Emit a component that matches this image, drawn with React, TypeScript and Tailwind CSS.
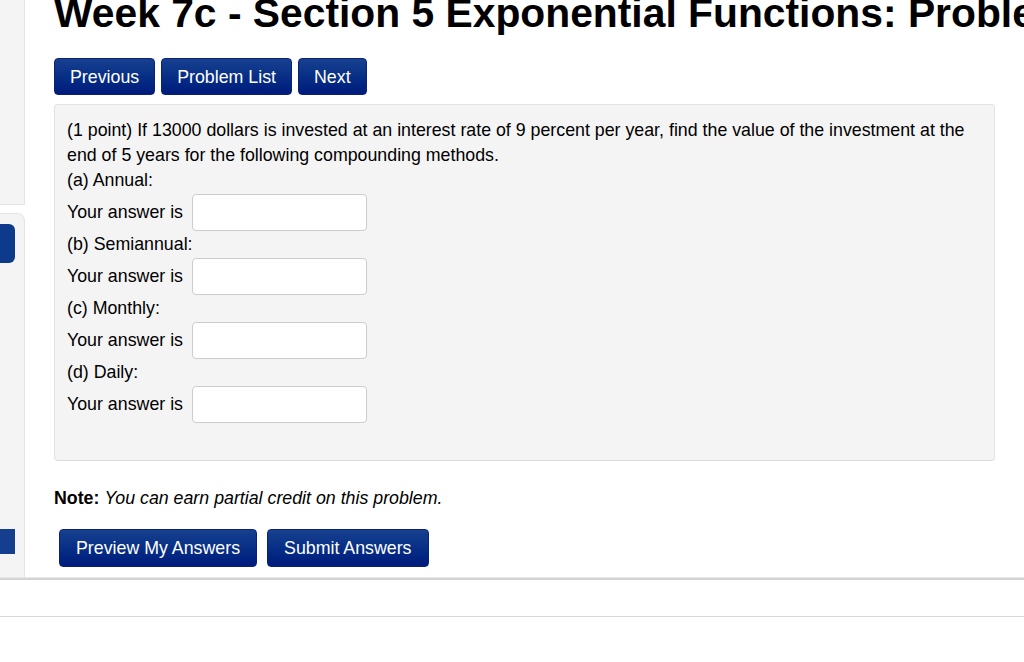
import React from "react";

function NavButton({ label }: { label: string }) {
  return (
    <button className="h-[37px] px-[15px] rounded-[4px] border border-[#0b2375] bg-gradient-to-b from-[#17408f] to-[#001a7c] text-white text-[17.8px] leading-none pt-[2px]">
      {label}
    </button>
  );
}

function AnswerRow() {
  return (
    <div className="flex items-center my-[1px] h-[37px]">
      <span className="mr-[9px]">Your answer is</span>
      <input
        type="text"
        className="w-[175px] h-[37px] bg-white border border-[#cccccc] rounded-[4px] outline-none"
      />
    </div>
  );
}

export default function App() {
  return (
    <div
      className="w-[1024px] h-[662px] overflow-hidden bg-white text-black"
      style={{ fontFamily: '"Liberation Sans", Arial, sans-serif' }}
    >
      <div className="flex h-[577px]">
        {/* sidebar */}
        <div className="w-[25px] flex flex-col shrink-0">
          <div className="h-[205px] bg-[#f4f4f4] border-r border-b border-[#e4e4e4]" />
          <div className="h-[8px]" />
          <div className="flex-1 bg-[#f4f4f4] border-r border-t border-[#e4e4e4] rounded-tr-[8px] flex flex-col">
            <div className="mt-[10px] h-[39px] w-[15px] bg-[#0d3a8b] rounded-r-[6px]" />
            <div className="mt-[266px] h-[25px] w-[15px] bg-[#153e8e]" />
          </div>
        </div>
        {/* main */}
        <div className="flex-1 pl-[29px] pr-[29px] overflow-hidden">
          <h1 className="mt-[-9px] text-[40.8px] leading-[44px] font-bold whitespace-nowrap">
            Week 7c - Section 5 Exponential Functions: Problem 9
          </h1>
          <div className="mt-[23px] flex gap-[6px]">
            <NavButton label="Previous" />
            <NavButton label="Problem List" />
            <NavButton label="Next" />
          </div>
          <div className="mt-[9px] h-[357px] bg-[#f4f4f4] border border-[#e2e2e2] border-b-[#dcdcdc] rounded-[4px] px-[12px] pt-[13px] text-[17.8px] leading-[25px] whitespace-nowrap">
            <div>
              (1 point) If 13000 dollars is invested at an interest rate of 9 percent per year, find the value of the investment at the
              <br />
              end of 5 years for the following compounding methods.
            </div>
            <div>(a) Annual:</div>
            <AnswerRow />
            <div>(b) Semiannual:</div>
            <AnswerRow />
            <div>(c) Monthly:</div>
            <AnswerRow />
            <div>(d) Daily:</div>
            <AnswerRow />
          </div>
          <div className="mt-[25px] text-[17.8px] leading-[25px]">
            <span className="font-bold">Note:</span> <i>You can earn partial credit on this problem.</i>
          </div>
          <div className="mt-[18px] ml-[5px] flex gap-[10px]">
            <button className="h-[38px] px-[16px] pt-[2px] rounded-[4px] border border-[#0b2375] bg-gradient-to-b from-[#17408f] to-[#001a7c] text-white text-[17.8px] leading-none">
              Preview My Answers
            </button>
            <button className="h-[38px] px-[16px] pt-[2px] rounded-[4px] border border-[#0b2375] bg-gradient-to-b from-[#17408f] to-[#001a7c] text-white text-[17.8px] leading-none">
              Submit Answers
            </button>
          </div>
        </div>
      </div>
      <div className="h-[3px] bg-[#d4d4d4] border-t border-[#e8e8e8]" />
      <div className="h-[37px] bg-white border-b border-[#d8d8d8]" />
    </div>
  );
}
